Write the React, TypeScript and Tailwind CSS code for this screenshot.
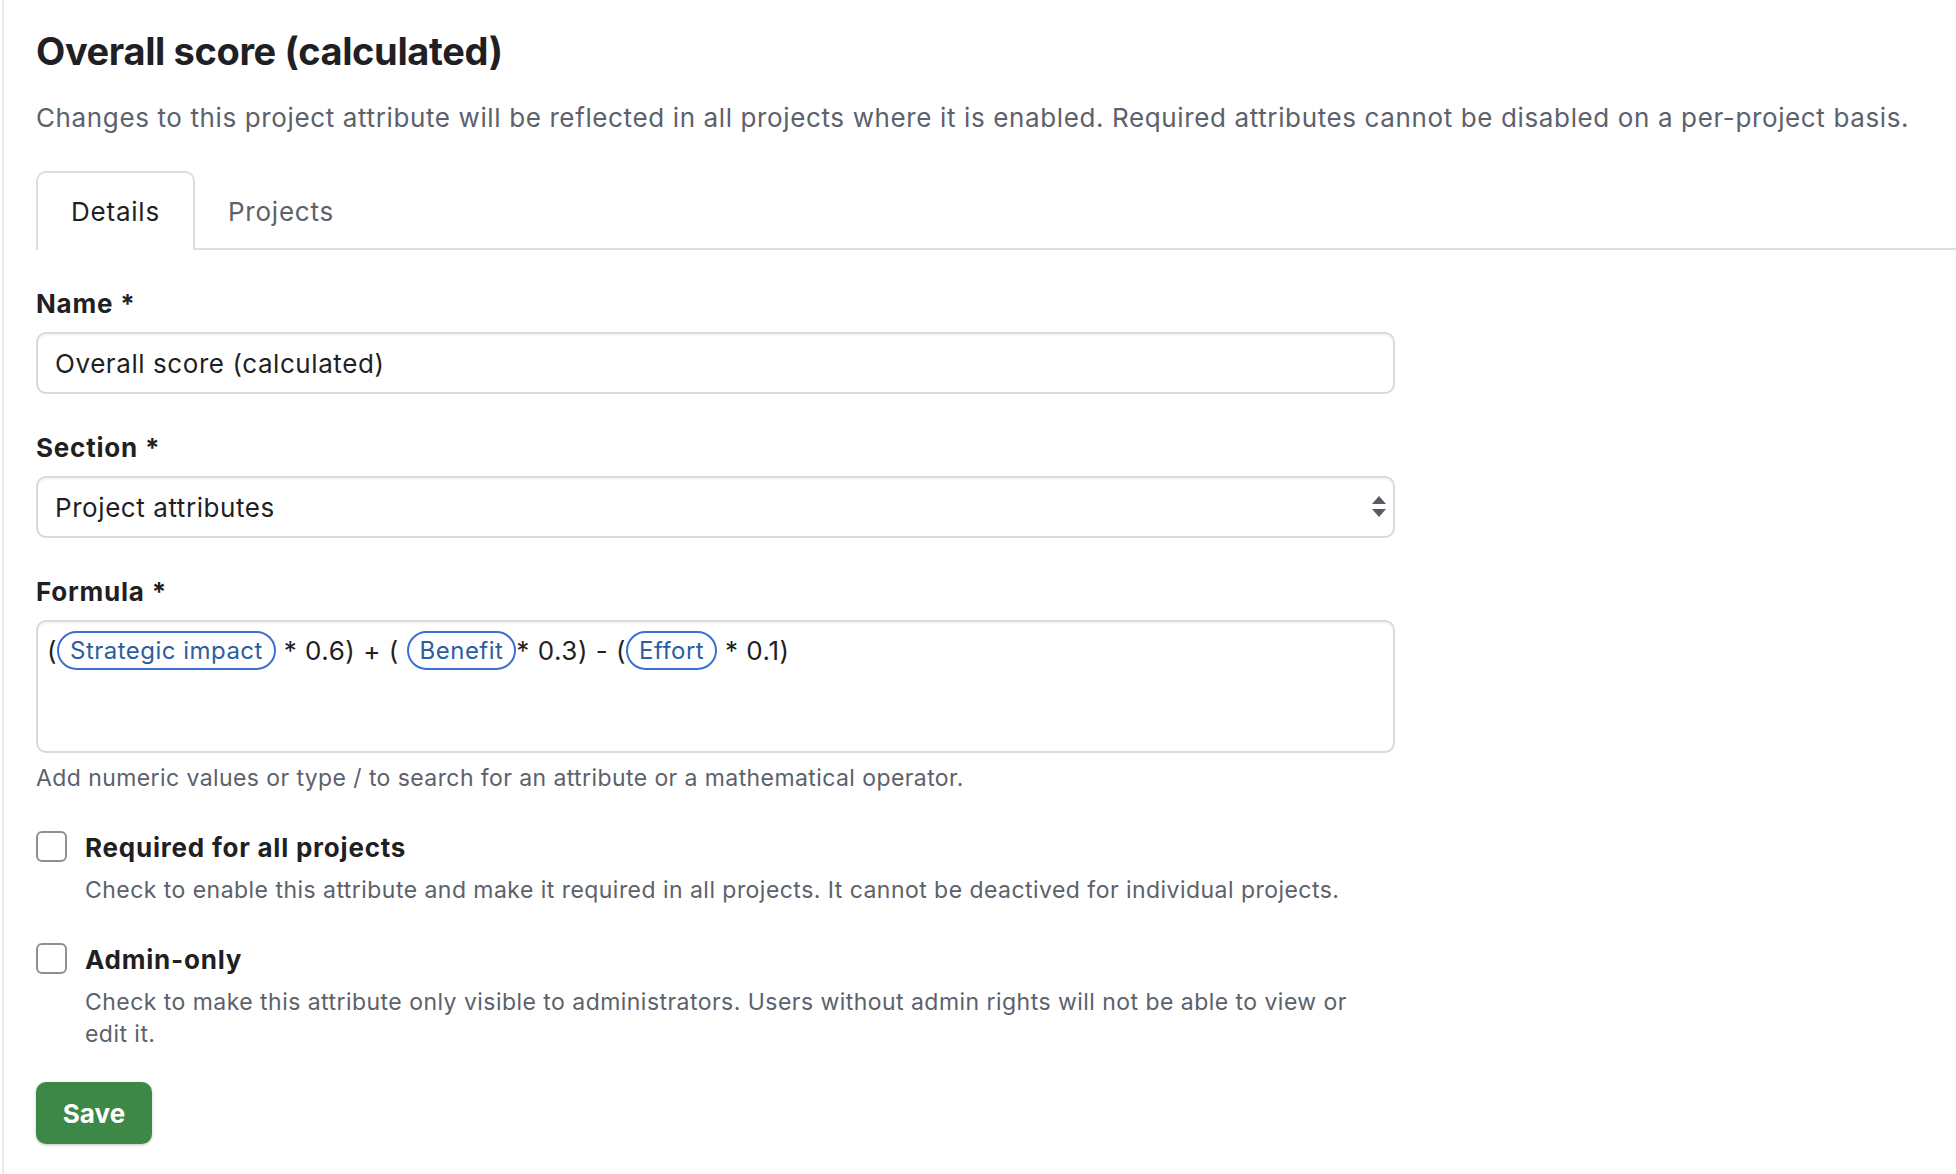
import * as React from "react";

const Chip = ({ children }: { children: React.ReactNode }) => (
  <span className="inline-flex h-[39px] items-center rounded-full border-2 border-[#3b6fd4] px-[11px] text-[24px] tracking-[0.02em] text-[#2c5e9f]">
    {children}
  </span>
);

const Check = ({ label, help }: { label: string; help: string }) => (
  <div className="flex items-start gap-[18px]">
    <div className="mt-[1px] h-[31px] w-[31px] shrink-0 rounded-[6px] border-2 border-[#8d9099] bg-white" />
    <div className="flex flex-col">
      <span className="text-[26px] font-bold leading-[36px] tracking-[0.03em] text-[#1f1f24]">{label}</span>
      <p className="mt-[8px] max-w-[1290px] text-[23px] leading-[32px] tracking-[0.02em] text-[#5c616b]">{help}</p>
    </div>
  </div>
);

export default function App() {
  return (
    <div className="min-h-[1174px] bg-white font-['Inter',sans-serif]">
      <div className="ml-[2px] min-h-[1174px] border-l-2 border-[#ebebeb] pl-[32px] pt-[27px]">
        <h1 className="text-[38px] font-bold leading-[48px] tracking-[-0.01em] text-[#1f1f24]">Overall score (calculated)</h1>
        <p className="mt-[25px] text-[26px] leading-[36px] tracking-[0.024em] text-[#5c616b]">
          Changes to this project attribute will be reflected in all projects where it is enabled. Required attributes cannot be disabled on a per-project basis.
        </p>

        <div className="mt-[35px] flex border-b-2 border-[#dcdde1]">
          <div className="-mb-[2px] rounded-t-[10px] border-2 border-b-0 border-[#dcdde1] bg-white px-[33px] pb-[20px] pt-[21px] text-[26px] leading-[36px] tracking-[0.03em] text-[#1f1f24]">
            Details
          </div>
          <div className="px-[33px] pb-[18px] pt-[23px] text-[26px] leading-[36px] tracking-[0.03em] text-[#5c616b]">Projects</div>
        </div>

        <div className="w-[1359px]">
          <label className="mt-[36px] block text-[26px] font-bold leading-[36px] tracking-[0.03em] text-[#1f1f24]">Name *</label>
          <div className="mt-[10px] flex h-[62px] items-center rounded-[10px] border-2 border-[#d7d9de] px-[17px] text-[26px] tracking-[0.022em] text-[#1f1f24] shadow-[inset_0_2px_2px_rgba(0,0,0,0.04)]">
            Overall score (calculated)
          </div>

          <label className="mt-[36px] block text-[26px] font-bold leading-[36px] tracking-[0.03em] text-[#1f1f24]">Section *</label>
          <div className="mt-[10px] flex h-[62px] items-center justify-between rounded-[10px] border-2 border-[#d7d9de] pl-[17px] pr-[6px] text-[26px] tracking-[0.022em] text-[#1f1f24] shadow-[inset_0_2px_2px_rgba(0,0,0,0.04)]">
            <span>Project attributes</span>
            <svg width="16" height="22" viewBox="0 0 16 22" className="fill-[#575b63]">
              <polygon points="1,8 15,8 8,0" />
              <polygon points="1,13 15,13 8,21" />
            </svg>
          </div>

          <label className="mt-[36px] block text-[26px] font-bold leading-[36px] tracking-[0.03em] text-[#1f1f24]">Formula *</label>
          <div className="mt-[10px] h-[133px] rounded-[10px] border-2 border-[#d7d9de] px-[9px] pt-[9px] text-[26px] tracking-[0.02em] text-[#1f1f24] shadow-[inset_0_2px_2px_rgba(0,0,0,0.04)]">
            <div className="flex flex-wrap items-center whitespace-pre">
              <span>(</span>
              <Chip>Strategic impact</Chip>
              <span> * 0.6) + ( </span>
              <Chip>Benefit</Chip>
              <span>* 0.3) - (</span>
              <Chip>Effort</Chip>
              <span> * 0.1)</span>
            </div>
          </div>
          <p className="mt-[10px] text-[23px] leading-[31px] tracking-[0.018em] text-[#5c616b]">
            Add numeric values or type / to search for an attribute or a mathematical operator.
          </p>

          <div className="mt-[36px] flex flex-col gap-[36px]">
            <Check
              label="Required for all projects"
              help="Check to enable this attribute and make it required in all projects. It cannot be deactived for individual projects."
            />
            <Check
              label="Admin-only"
              help="Check to make this attribute only visible to administrators. Users without admin rights will not be able to view or edit it."
            />
          </div>

          <button className="mt-[32px] flex h-[62px] w-[116px] items-center justify-center rounded-[10px] bg-[#3e8847] text-[26px] font-bold text-white shadow-[0_1px_3px_rgba(0,0,0,0.25)]">
            Save
          </button>
        </div>
      </div>
    </div>
  );
}
